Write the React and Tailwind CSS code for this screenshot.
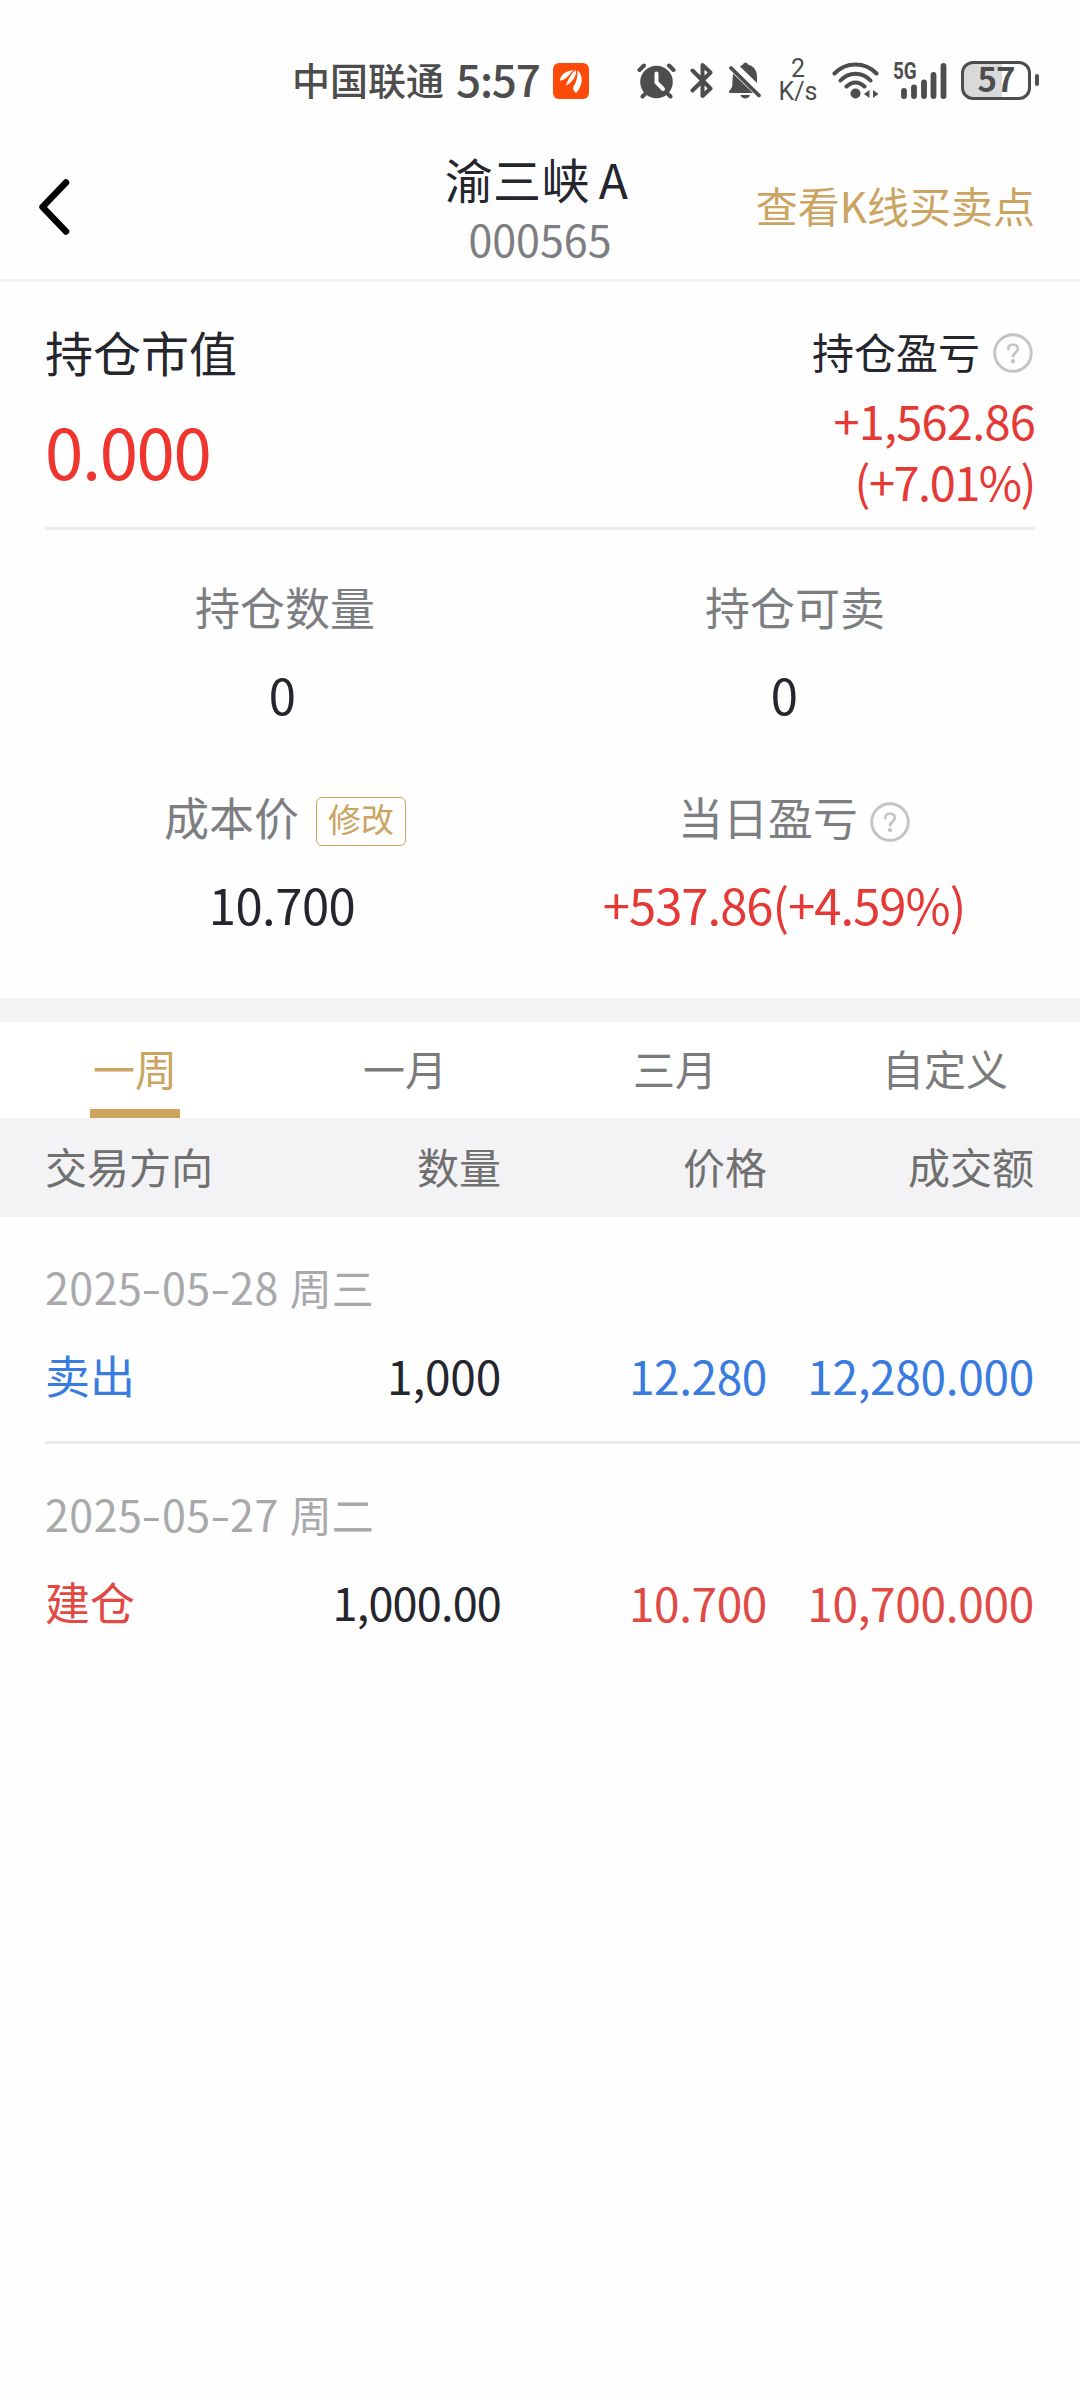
import React from 'react';

const SUMMARY = [
  [
    { label: '持仓数量', value: '0' },
    { label: '持仓可卖', value: '0' },
  ],
  [
    { label: '成本价', value: '10.700', edit: true },
    { label: '当日盈亏', value: '+537.86(+4.59%)', help: true, up: true },
  ],
];

const TABS = ['一周', '一月', '三月', '自定义'];

const TRADES = [
  { date: '2025-05-28', day: '周三', side: '卖出', qty: '1,000', price: '12.280', total: '12,280.000', color: 'text-[#3a7be0]', qtyClass: 'tracking-[-0.2px]' },
  { date: '2025-05-27', day: '周二', side: '建仓', qty: '1,000.00', price: '10.700', total: '10,700.000', color: 'text-[#e04944]', qtyClass: 'text-[45px] tracking-[-0.8px]' },
];

function Help({ className }) {
  return (
    <svg className={className} width="40" height="40" viewBox="0 0 40 40" fill="none" stroke="#c4c4c4" strokeLinecap="round">
      <circle cx="20" cy="20" r="18.3" strokeWidth="2.9" />
      <path d="M15.3 16.2c0-3 2-4.7 4.8-4.7s4.8 1.7 4.8 4.3c0 3.6-4.8 4-4.8 7.6" strokeWidth="2.7" />
      <circle cx="20" cy="28.2" r="2.1" fill="#c4c4c4" stroke="none" />
    </svg>
  );
}

function StatusBar() {
  return (
    <div className="flex h-[120px] items-center pl-[292px] pt-[40px] leading-none text-[#4d4d4d]">
      <span className="-mt-[3px] w-[164px] whitespace-nowrap text-[38px] font-medium">中国联通</span>
      <span className="-mt-[5px] w-[97px] whitespace-nowrap text-[44px] font-medium tracking-[-1.2px]">5:57</span>
      <svg className="mt-[2px]" width="36" height="36" viewBox="0 0 36 36">
        <rect width="36" height="36" rx="6" fill="#fd4a08" />
        <g fill="#fff">
          <path d="M7 17.800C7.200 11.500 13 7.600 21 7.200C17 9.500 15 15.800 7 17.800Z" />
          <path d="M13.500 20.500C16.500 14.500 18.500 9.500 23 7.200C23.800 12.500 20 18.500 13.500 22.500Z" />
          <path d="M20 24.500C23.500 19.500 25 13 24.300 7.600C30.500 11.500 30.500 23 22.800 30.200C22.500 28 20 28.500 20 24.500Z" />
        </g>
      </svg>
      <svg className="ml-[48px]" width="39" height="37" viewBox="0 0 39 37" stroke="#4d4d4d" strokeWidth="4" strokeLinecap="round" fill="none">
        <circle cx="19.500" cy="20" r="16.300" fill="#4d4d4d" stroke="none" />
        <path d="M2.500 8L7 3.500M36.500 8L32 3.500M8 32L5.500 34.500M31 32L33.500 34.500" />
        <path d="M19.500 11.500V20.500L26 27" stroke="#fff" />
      </svg>
      <svg className="ml-[14px]" width="24" height="37" viewBox="0 0 24 37" stroke="#4d4d4d" strokeWidth="4" strokeLinecap="round" strokeLinejoin="round" fill="none">
        <path d="M2.500 8.500L20.500 26.500L12.500 34V3L20.500 10.500L2.500 28.500" />
      </svg>
      <svg className="ml-[14px]" width="34" height="37" viewBox="0 0 34 37" fill="#4d4d4d">
        <path d="M12 4.500C13 3.500 14.500 3 15 2.500C15.500 0 19.500 0 20 2.500C26 4 29 9 29 14.500V21Z" />
        <path d="M5 11.500L25 31H3C0.500 31 0.500 29 2 28C4.500 26 4.500 23 4.500 19Z" />
        <path d="M12.500 33H22C21 37.500 13.500 37.500 12.500 33Z" />
        <path d="M3 6L31 33.500" stroke="#4d4d4d" strokeWidth="3.800" strokeLinecap="round" />
      </svg>
      <span className="ml-[17px] flex w-[38px] flex-col items-center font-['Roboto'] text-[25px] leading-[23px]">
        <span>2</span>
        <span className="whitespace-nowrap">K/s</span>
      </span>
      <svg className="ml-[15px]" width="48" height="37" viewBox="0 0 48 37" stroke="#4d4d4d" strokeWidth="4" strokeLinecap="round" fill="none">
        <path d="M2.500 11.500C14 -0.500 33 -0.500 44.500 11.500M8.500 18.500C17 9.500 30 9.500 38.500 18.500M14.500 24.500C20 19 27 19 32.500 24.500" />
        <circle cx="23.500" cy="31.500" r="5" fill="#4d4d4d" stroke="none" />
        <path d="M37.500 28V36L32 32ZM41 28V36L46.500 32Z" fill="#4d4d4d" stroke="none" />
      </svg>
      <span className="relative ml-[13px] h-[37px] w-[54px]">
        <span className="absolute left-0 top-0 origin-left scale-x-[0.820] font-['Roboto'] text-[23px] font-bold leading-[19px]">5G</span>
        <svg className="absolute left-0 top-0" width="54" height="37" viewBox="0 0 54 37" stroke="#4d4d4d" strokeWidth="5.800" strokeLinecap="round">
          <path d="M11 29V34M21 25.500V34M31 20.500V34M40.500 13V34M50.500 4V34" />
        </svg>
      </span>
      <span className="ml-[14px] flex h-[39px] w-[70px] items-center justify-center rounded-[12px] border-[3px] border-[#4d4d4d] bg-[linear-gradient(to_right,#d9d9d9_60%,#fff_60%)]">
        <span className="-mt-[3px] text-[33px] font-bold leading-none tracking-[-1px]">57</span>
      </span>
      <span className="ml-[4px] h-[12px] w-[4px] rounded-full bg-[#4d4d4d]" />
    </div>
  );
}

function Header() {
  return (
    <header className="grid h-[162px] grid-cols-[1fr_auto_1fr] items-center border-b-[3px] border-[#f3f3f4] pt-[15px]">
      <svg className="ml-[38px]" width="34" height="56" viewBox="0 0 34 56" fill="none" stroke="#000" strokeWidth="6.500" strokeLinecap="round" strokeLinejoin="round">
        <path d="M28 3.500L4.500 28L28 52.500" />
      </svg>
      <div className="flex flex-col items-center">
        <h1 className="h-[62px] pr-[7px] pt-[2px] text-[48px] leading-[60px] tracking-[0.300px]">
          渝三峡<span className="ml-[9px]">A</span>
        </h1>
        <div className="text-[43px] leading-[60px] text-[#7d7e82]">000565</div>
      </div>
      <a className="-mt-[4px] mr-[45px] justify-self-end whitespace-nowrap text-[42px] leading-[60px] text-[#cba461]">查看K线买卖点</a>
    </header>
  );
}

function TradeDate({ date }) {
  return date.split('-').map((part, i) => (
    <React.Fragment key={i}>
      {i > 0 && <span className="mx-[2px] inline-block scale-x-[1.350]">-</span>}
      {part}
    </React.Fragment>
  ));
}

export default function App() {
  return (
    <div className="h-[2400px] w-[1080px] bg-[#fefefe] font-['Noto_Sans_CJK_SC',sans-serif] text-[#24252d]" lang="zh-CN">
      <StatusBar />
      <Header />

      <section className="mx-[45px] flex h-[248px] justify-between border-b-[3px] border-[#ebebeb] pt-[39px]">
        <div>
          <div className="text-[48px] leading-[60px]">持仓市值</div>
          <div className="mt-[31px] text-[69px] leading-[76px] tracking-[-1.400px] text-[#f0342e]">0.000</div>
        </div>
        <div className="text-right">
          <div className="flex items-center justify-end pr-[2px] text-[42px] leading-[60px]">
            持仓盈亏
            <Help className="ml-[13px] mt-[4px]" />
          </div>
          <div className="mt-[8px] text-[47px] leading-[61px] text-[#e53935]">
            <div className="tracking-[-0.800px]">+1,562.86</div>
            <div className="tracking-[-1.500px]">(+7.01%)</div>
          </div>
        </div>
      </section>

      <section className="pb-[64px] pt-[47px]">
        {SUMMARY.map((row, i) => (
          <div key={i} className={i ? 'mt-[63px]' : ''}>
            <div className="grid grid-cols-2 px-[30px] text-[45px] leading-[60px] text-[#7d7e82]">
              {row.map((m) => (
                <div key={m.label} className="flex items-center justify-center">
                  {m.label}
                  {m.edit && (
                    <span className="ml-[17px] mt-[8px] flex h-[49px] w-[90px] items-center justify-center rounded-[6px] border border-[#cba461] pb-[5px] text-[33px] leading-none text-[#cba461]">
                      修改
                    </span>
                  )}
                  {m.help && <Help className="mr-[2px] ml-[12px] mt-[9px]" />}
                </div>
              ))}
            </div>
            <div className="mt-[27px] grid grid-cols-2 pl-[31px] pr-[45px] text-center text-[49px] leading-[60px]">
              {row.map((m) => (
                <div key={m.label} className={m.up ? 'tracking-[-1px] text-[#e53935]' : 'tracking-[-0.500px]'}>{m.value}</div>
              ))}
            </div>
          </div>
        ))}
      </section>

      <div className="h-[24px] bg-[#f3f3f5]" />

      <nav className="grid h-[96px] grid-cols-4 bg-white text-[42px] text-[#7b7b7b]">
        {TABS.map((t, i) => (
          <div key={t} className={i === 0 ? 'flex flex-col items-center text-[#cba461]' : 'flex flex-col items-center'}>
            <span className="h-[87px] pt-[4px] leading-[83px]">{t}</span>
            {i === 0 && <span className="h-[9px] w-[90px] bg-[#cea45b]" />}
          </div>
        ))}
      </nav>

      <div className="grid h-[99px] grid-cols-[200px_256px_266px_267px] bg-[#f3f3f5] pl-[45px] text-right text-[42px] leading-[95px] text-[#707070]">
        <span className="text-left">交易方向</span>
        <span>数量</span>
        <span>价格</span>
        <span>成交额</span>
      </div>

      {TRADES.map((t, i) => (
        <article key={t.date} className={i ? 'ml-[45px] border-t-[3px] border-[#ebebeb] pt-[39px]' : 'ml-[45px] pb-[36px] pt-[39px]'}>
          <div className="text-[43px] leading-[60px] tracking-[0.500px] text-[#a9a9ac]">
            <TradeDate date={t.date} />
            <span className="ml-[11px] text-[42px] tracking-normal">{t.day}</span>
          </div>
          <div className="mt-[28px] grid grid-cols-[200px_256px_266px_267px] text-right text-[46px] leading-[60px]">
            <span className={`text-left text-[45px] ${t.color}`}>{t.side}</span>
            <span className={t.qtyClass}>{t.qty}</span>
            <span className={`tracking-[-0.400px] ${t.color}`}>{t.price}</span>
            <span className={`tracking-[-0.300px] ${t.color}`}>{t.total}</span>
          </div>
        </article>
      ))}
    </div>
  );
}
